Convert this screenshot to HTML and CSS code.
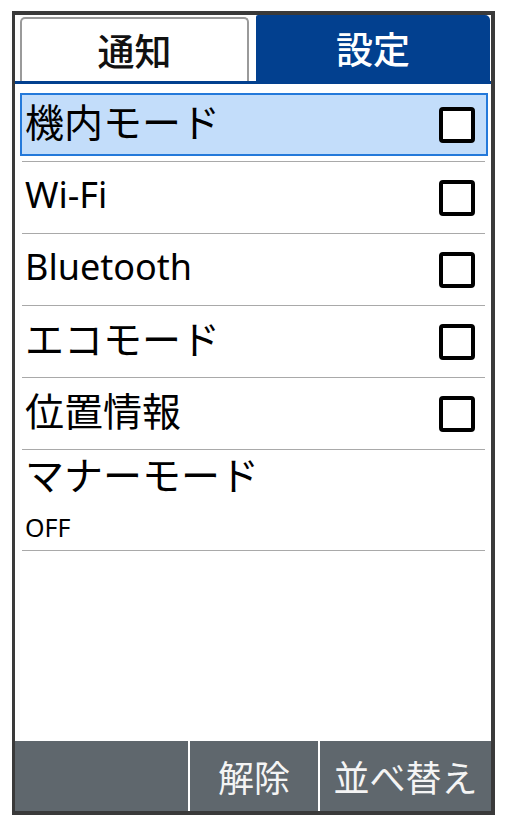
FILE: index.html
```html
<!DOCTYPE html>
<html lang="ja">
<head>
    <meta charset="UTF-8">
    <meta name="viewport" content="width=device-width, initial-scale=1.0">
    <title>設定</title>
    <link rel="stylesheet" href="styles.css">
</head>
<body>

    <div class="screen">
        <!-- Tabs -->
        <div class="tabs">
            <div class="tab">通知</div>
            <div class="tab active">設定</div>
        </div>

        <!-- Settings list -->
        <div class="list">
            <div class="item first">
                <div class="item-body selected">
                    <span class="label">機内モード</span>
                    <span class="check"></span>
                </div>
            </div>
            <div class="item">
                <div class="item-body">
                    <span class="label en">Wi-Fi</span>
                    <span class="check"></span>
                </div>
            </div>
            <div class="item">
                <div class="item-body">
                    <span class="label en">Bluetooth</span>
                    <span class="check"></span>
                </div>
            </div>
            <div class="item">
                <div class="item-body">
                    <span class="label">エコモード</span>
                    <span class="check"></span>
                </div>
            </div>
            <div class="item">
                <div class="item-body">
                    <span class="label">位置情報</span>
                    <span class="check"></span>
                </div>
            </div>
            <div class="item">
                <div class="item-body stacked">
                    <span class="label">マナーモード</span>
                    <span class="sub">OFF</span>
                </div>
            </div>
        </div>

        <!-- Soft keys -->
        <div class="softkeys">
            <div class="key"></div>
            <div class="key">解除</div>
            <div class="key">並べ替え</div>
        </div>
    </div>

</body>
</html>
```

FILE: styles.css
```css
/* Page */
body, html {
    margin: 0;
    padding: 0;
    background: #fff;
}

body {
    padding: 11px 0 0 12px;
    font-family: "Noto Sans", "Noto Sans CJK JP", sans-serif;
}

.screen {
    width: 476px;
    height: 796px;
    border: 4px solid #3a3a3a;
    border-left-width: 3px;
    display: flex;
    flex-direction: column;
    background: #fff;
}

/* Tabs */
.tabs {
    display: flex;
    align-items: flex-end;
    height: 66px;
    padding: 0 1px 0 5px;
    border-bottom: 3px solid #02408f;
}

.tab {
    width: 225px;
    height: 62px;
    border: 2px solid #9a9a9a;
    border-bottom: none;
    border-radius: 5px 5px 0 0;
    display: flex;
    align-items: center;
    justify-content: center;
    font-family: "Noto Sans CJK JP", sans-serif;
    font-size: 37px;
    font-weight: 500;
    color: #111;
}

.tab.active {
    width: auto;
    flex: 1;
    height: 66px;
    margin-left: 7px;
    border: none;
    border-radius: 2px 5px 0 0;
    background: #02408f;
    color: #fff;
}

/* List */
.list {
    flex: 1;
    padding-top: 9px;
}

.item {
    margin: 0 6px 0 7px;
    border-bottom: 1px solid #a9a9a9;
}

.item.first {
    padding-bottom: 5px;
}

.item-body {
    height: 71px;
    display: flex;
    align-items: center;
    justify-content: space-between;
    padding: 0 10px 0 3px;
    font-size: 39px;
    color: #000;
}

.item-body.selected {
    height: 59px;
    margin: 0 -3px 0 -2px;
    padding: 0 11px 0 3px;
    border: 2px solid #2479da;
    background: #c3ddfa;
}

.item-body.stacked {
    height: auto;
    flex-direction: column;
    align-items: flex-start;
    justify-content: flex-start;
    padding-top: 2px;
    padding-bottom: 3px;
}

.label {
    line-height: 46px;
    margin-bottom: 5px;
}

.label.en {
    font-size: 36px;
}

.stacked .label {
    margin-bottom: 0;
}

.stacked .sub {
    font-size: 25px;
    line-height: 40px;
    margin-top: 9px;
}

.check {
    width: 28px;
    height: 28px;
    border: 4px solid #000;
    border-radius: 4px;
    background: #fff;
}

/* Soft keys */
.softkeys {
    display: flex;
    height: 70px;
    background: #5f676d;
}

.key {
    display: flex;
    align-items: center;
    justify-content: center;
    font-family: "Noto Sans CJK JP", sans-serif;
    font-size: 36px;
    color: #f4f4f4;
}

.key:nth-child(1) {
    width: 173px;
}

.key:nth-child(2) {
    width: 128px;
    border-left: 2px solid #fff;
}

.key:nth-child(3) {
    flex: 1;
    border-left: 2px solid #fff;
}
```
